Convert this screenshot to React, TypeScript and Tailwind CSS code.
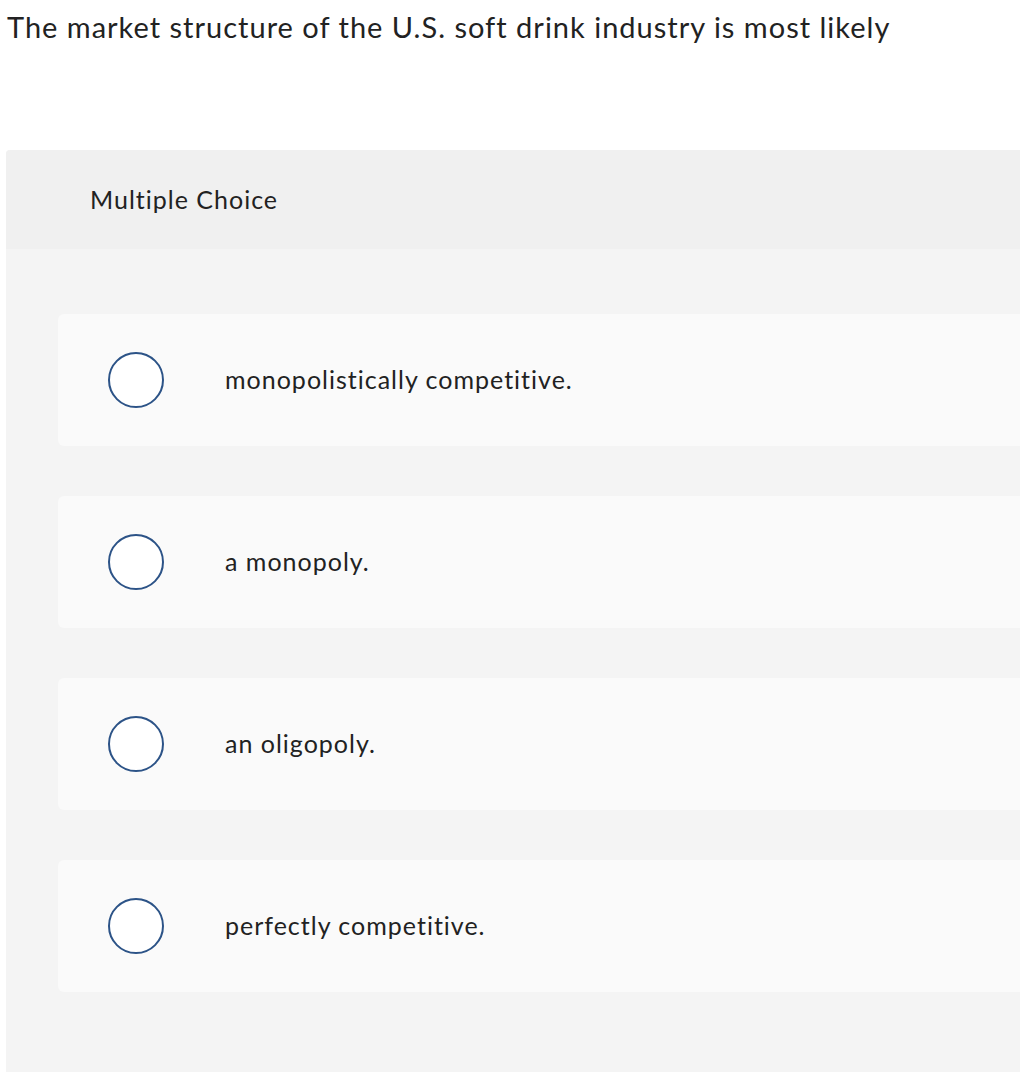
const options = [
  "monopolistically competitive.",
  "a monopoly.",
  "an oligopoly.",
  "perfectly competitive.",
];

export default function App() {
  return (
    <div className="h-[1082px] w-[1020px] overflow-hidden bg-white font-['Lato','Noto_Sans',sans-serif] text-[#222]">
      <h1 className="pl-[7px] pt-[9px] text-[29px] leading-[36px] font-normal tracking-[1px]">
        The market structure of the U.S. soft drink industry is most likely
      </h1>

      <div className="ml-[6px] mt-[105px] w-[1080px] rounded-t-[4px] bg-[#f4f4f4]">
        <div className="flex h-[99px] items-center rounded-t-[4px] bg-[#f0f0f0] pl-[84px] text-[25px] tracking-[1px]">
          Multiple Choice
        </div>

        <div className="flex h-[823px] flex-col gap-[50px] pl-[52px] pt-[65px]">
          {options.map((text) => (
            <label
              key={text}
              className="flex h-[132px] items-center rounded-[6px] bg-[#fafafa] pl-[50px]"
            >
              <span className="h-[56px] w-[56px] shrink-0 rounded-full border-2 border-[#2c5387] bg-white" />
              <span className="ml-[61px] text-[25px] tracking-[1px]">{text}</span>
            </label>
          ))}
        </div>
      </div>
    </div>
  );
}
